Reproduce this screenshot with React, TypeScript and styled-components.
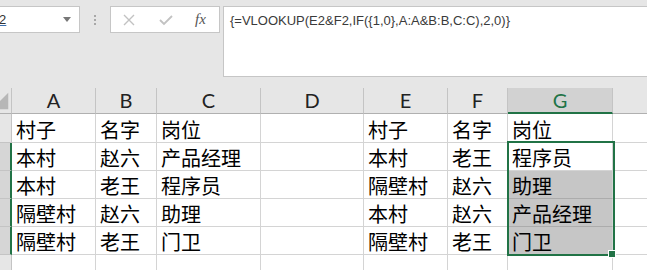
import React from "react";
import styled, { createGlobalStyle } from "styled-components";

const GlobalStyle = createGlobalStyle`
  html, body {
    margin: 0;
    padding: 0;
    background: #ffffff;
    overflow: hidden;
  }
  * {
    box-sizing: border-box;
  }
`;

const GREEN = "#217346";

// the last column (H) runs past the window edge, its letter is not in view
const columns = ["A", "B", "C", "D", "E", "F", "G", ""];
const colWidths = [84, 61, 104, 103, 84, 60, 105, 84];
const selectedCol = 6;

const rows: string[][] = [
  ["村子", "名字", "岗位", "", "村子", "名字", "岗位", ""],
  ["本村", "赵六", "产品经理", "", "本村", "老王", "程序员", ""],
  ["本村", "老王", "程序员", "", "隔壁村", "赵六", "助理", ""],
  ["隔壁村", "赵六", "助理", "", "本村", "赵六", "产品经理", ""],
  ["隔壁村", "老王", "门卫", "", "隔壁村", "老王", "门卫", ""],
  ["", "", "", "", "", "", "", ""],
];

export default function App() {
  return (
    <>
      <GlobalStyle />
      <Page>
        <TopBar>
          <NameBox>
            <NameText>G2</NameText>
            <DropArrow />
          </NameBox>
          <Grip>
            <GripDot />
            <GripDot />
            <GripDot />
          </Grip>
          <ButtonBox>
            <IconButton>
              <svg width="12" height="12" viewBox="0 0 12 12">
                <path d="M1 1 L11 11 M11 1 L1 11" stroke="#c2c2c2" strokeWidth="1.4" fill="none" />
              </svg>
            </IconButton>
            <IconButton>
              <svg width="14" height="12" viewBox="0 0 14 12">
                <path d="M1 6 L5 10 L13 2" stroke="#c2c2c2" strokeWidth="1.8" fill="none" />
              </svg>
            </IconButton>
            <FxLabel>fx</FxLabel>
          </ButtonBox>
          <FormulaBar>{"{=VLOOKUP(E2&F2,IF({1,0},A:A&B:B,C:C),2,0)}"}</FormulaBar>
        </TopBar>

        <Sheet>
          <Corner>
            <svg width="12" height="25" viewBox="0 0 12 25">
              <polygon points="9,4 9,22 0,22 0,13" fill="#b7b7b7" />
            </svg>
          </Corner>
          {columns.map((c, i) => (
            <ColHeader key={i} $selected={i === selectedCol}>
              {c}
            </ColHeader>
          ))}

          {rows.map((row, r) => {
            const rowSelected = r >= 1 && r <= 4;
            return (
              <React.Fragment key={r}>
                <RowHeader $selected={rowSelected} />
                {row.map((text, c) => (
                  <Cell key={c} $highlight={c === selectedCol && r >= 2 && r <= 4}>
                    {text}
                  </Cell>
                ))}
              </React.Fragment>
            );
          })}

          <Selection />
          <FillHandle />
        </Sheet>
      </Page>
    </>
  );
}

const Page = styled.div`
  width: 647px;
  height: 270px;
  overflow: hidden;
`;

const TopBar = styled.div`
  height: 88px;
  background: #e6e6e6;
  display: flex;
  align-items: flex-start;
  padding-top: 6px;
`;

const NameBox = styled.div`
  margin-left: -20px;
  width: 100px;
  height: 27px;
  background: #ffffff;
  border: 1px solid #c6c6c6;
  display: flex;
  align-items: center;
  justify-content: space-between;
  padding: 0 6px 0 8px;
  font-family: "Liberation Sans", Arial, sans-serif;
  font-size: 13px;
  color: #333;
`;

const NameText = styled.span`
  text-decoration: underline;
  text-decoration-color: #3a6fb0;
`;

const DropArrow = styled.span`
  width: 0;
  height: 0;
  border-left: 4px solid transparent;
  border-right: 4px solid transparent;
  border-top: 5px solid #777;
  margin-right: 2px;
`;

const Grip = styled.div`
  width: 30px;
  height: 27px;
  display: flex;
  flex-direction: column;
  align-items: center;
  justify-content: center;
  gap: 2px;
`;

const GripDot = styled.span`
  width: 2px;
  height: 2px;
  background: #a8a8a8;
`;

const ButtonBox = styled.div`
  width: 110px;
  height: 27px;
  background: #ffffff;
  border: 1px solid #c6c6c6;
  display: grid;
  grid-template-columns: 30px 44px 1fr;
  align-items: center;
  justify-items: center;
  padding-left: 3px;
  margin-right: 3px;
`;

const IconButton = styled.div`
  display: flex;
  align-items: center;
  justify-content: center;
`;

const FxLabel = styled.span`
  font-family: "Liberation Serif", "Times New Roman", serif;
  font-style: italic;
  font-size: 15px;
  color: #555;
  margin-left: -6px;
`;

const FormulaBar = styled.div`
  flex: 1;
  height: 71px;
  margin-right: -10px;
  background: #ffffff;
  border: 1px solid #c6c6c6;
  padding: 4px 6px;
  font-family: "Liberation Sans", Arial, sans-serif;
  font-size: 13px;
  line-height: 20px;
  color: #3a3a3a;
  white-space: nowrap;
`;

const Sheet = styled.div`
  position: relative;
  width: max-content;
  display: grid;
  grid-template-columns: 12px ${colWidths.map((w) => `${w}px`).join(" ")};
  grid-template-rows: 26px 29px repeat(5, 28px);
`;

const Corner = styled.div`
  background: #e6e6e6;
  border-bottom: 1px solid #b0b0b0;
  border-right: 1px solid #c4c4c4;
  display: flex;
`;

const ColHeader = styled.div<{ $selected: boolean }>`
  background: ${(p) => (p.$selected ? "#d2d2d2" : "#e6e6e6")};
  border-right: 1px solid #c4c4c4;
  border-bottom: ${(p) => (p.$selected ? `2px solid ${GREEN}` : "1px solid #b0b0b0")};
  color: ${(p) => (p.$selected ? GREEN : "#222")};
  font-family: Lato, "Liberation Sans", sans-serif;
  font-size: 20px;
  line-height: 25px;
  text-align: center;
`;

const RowHeader = styled.div<{ $selected: boolean }>`
  background: ${(p) => (p.$selected ? "#d6d6d6" : "#e6e6e6")};
  border-right: ${(p) => (p.$selected ? `2px solid ${GREEN}` : "1px solid #c4c4c4")};
  border-bottom: 1px solid #c4c4c4;
`;

const Cell = styled.div<{ $highlight: boolean }>`
  background: ${(p) => (p.$highlight ? "#c6c6c6" : "#ffffff")};
  border-right: 1px solid #d4d4d4;
  border-bottom: 1px solid ${(p) => (p.$highlight ? "#acacac" : "#d4d4d4")};
  display: flex;
  align-items: flex-end;
  padding: 0 0 2px 4px;
  font-family: "Noto Sans CJK SC", "Noto Sans", sans-serif;
  font-size: 20px;
  line-height: 20px;
  color: #000;
  white-space: nowrap;
  overflow: hidden;
`;

const Selection = styled.div`
  position: absolute;
  left: 507px;
  top: 53px;
  width: 108px;
  height: 115px;
  border: 2px solid ${GREEN};
  pointer-events: none;
`;

const FillHandle = styled.div`
  position: absolute;
  left: 608px;
  top: 162px;
  width: 8px;
  height: 8px;
  background: ${GREEN};
  border: 1px solid #ffffff;
`;
